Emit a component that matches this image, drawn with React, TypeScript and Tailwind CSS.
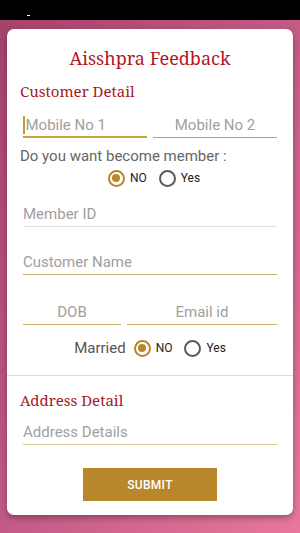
import React from "react";

const serif = "font-['Noto_Serif','DejaVu_Serif',serif]";
const sans = "font-['Roboto','Liberation_Sans',sans-serif]";

// Underlined text field, Android style
const Field = ({
  label,
  center,
  line,
  focused,
  className = "",
}: {
  label: string;
  center?: boolean;
  line: string;
  focused?: boolean;
  className?: string;
}) => (
  <div className={`flex h-[24px] items-center ${line} ${className} ${center ? "justify-center" : ""}`}>
    {focused && <span className="mr-[1px] h-[18px] w-[1.5px] bg-[#c19a3c]" />}
    <span className="text-[15px] leading-none text-[#a0a0a0]">{label}</span>
  </div>
);

const Radio = ({ checked, label }: { checked?: boolean; label: string }) => (
  <div className="flex items-center gap-[5px]">
    <span
      className={`flex h-[17px] w-[17px] items-center justify-center rounded-full border-2 ${
        checked ? "border-[#b8862b]" : "border-[#5a5a5a]"
      }`}
    >
      {checked && <span className="h-[8px] w-[8px] rounded-full bg-[#b8862b]" />}
    </span>
    <span className="text-[12px] text-[#222]">{label}</span>
  </div>
);

export default function App() {
  return (
    <div className={`min-h-[533px] w-full ${sans} bg-gradient-to-br from-[#a3426a] via-[#c25a86] to-[#e8779c]`}>
      {/* status bar */}
      <div className="relative h-[20px] bg-black">
        <span className="absolute left-[27px] top-[15px] h-[1px] w-[3px] bg-white" />
      </div>

      <div className="mx-[7px] mt-[9px] rounded-[7px] bg-white pb-[14px] pt-[17px] shadow-[0_3px_6px_rgba(0,0,0,0.3)]">
        <h1 className={`${serif} text-center text-[18px] leading-[24px] text-[#b3161e]`}>Aisshpra Feedback</h1>

        <div className="px-[13px]">
          <h2 className={`${serif} mt-[11px] text-[15px] leading-[20px] text-[#a51a22]`}>Customer Detail</h2>
        </div>

        <div className="px-[16px]">
          <div className="mt-[13px] flex gap-[6px]">
            <Field label="Mobile No 1" focused line="border-b-2 border-[#c9a23c]" className="flex-1" />
            <Field label="Mobile No 2" center line="border-b border-[#b8a25a]" className="flex-1" />
          </div>
        </div>

        <div className="px-[13px]">
          <p className="mt-[8px] text-[15px] leading-[20px] text-[#666]">Do you want become member :</p>
          <div className="mt-[2px] flex h-[20px] items-center justify-center gap-[12px] pl-[8px]">
            <Radio checked label="NO" />
            <Radio label="Yes" />
          </div>
        </div>

        <div className="px-[16px]">
          <Field label="Member ID" line="border-b border-[#e0e0e0]" className="mt-[15px]" />
          <Field label="Customer Name" line="border-b border-[#c9ae6e]" className="mt-[24px]" />
          <div className="mt-[26px] flex gap-[6px]">
            <Field label="DOB" center line="border-b border-[#c9ae6e]" className="w-[98px]" />
            <Field label="Email id" center line="border-b border-[#c9ae6e]" className="flex-1" />
          </div>
          <div className="mt-[11px] flex h-[24px] items-center justify-center gap-[8px]">
            <span className="text-[15px] text-[#555]">Married</span>
            <div className="flex items-center gap-[12px]">
              <Radio checked label="NO" />
              <Radio label="Yes" />
            </div>
          </div>
        </div>

        <div className="mt-[15px] h-[1px] bg-[#dcdcdc]" />

        <div className="px-[13px]">
          <h2 className={`${serif} mt-[14px] text-[15px] leading-[20px] text-[#a51a22]`}>Address Detail</h2>
        </div>
        <div className="px-[16px]">
          <Field label="Address Details" line="border-b border-[#d8cc9c]" className="mt-[11px]" />
        </div>

        <div className="mt-[23px] flex justify-center">
          <button className="h-[33px] w-[134px] bg-[#b8862b] text-[12px] font-medium tracking-wide text-white">
            SUBMIT
          </button>
        </div>
      </div>
    </div>
  );
}
